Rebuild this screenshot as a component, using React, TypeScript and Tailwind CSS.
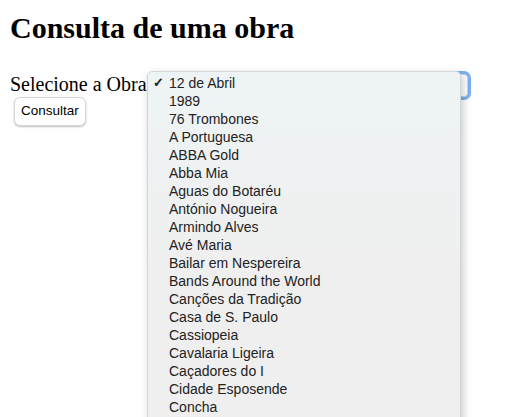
const obras = [
  "12 de Abril",
  "1989",
  "76 Trombones",
  "A Portuguesa",
  "ABBA Gold",
  "Abba Mia",
  "Aguas do Botaréu",
  "António Nogueira",
  "Armindo Alves",
  "Avé Maria",
  "Bailar em Nespereira",
  "Bands Around the World",
  "Canções da Tradição",
  "Casa de S. Paulo",
  "Cassiopeia",
  "Cavalaria Ligeira",
  "Caçadores do I",
  "Cidade Esposende",
  "Concha",
];

export default function App() {
  return (
    <div className="relative h-[417px] w-[519px] overflow-hidden bg-white pl-[10px] text-black" style={{ fontFamily: '"Liberation Serif", serif' }}>
      <h1 className="pt-[10px] text-[30px] font-bold leading-[36px]">Consulta de uma obra</h1>

      <form className="mt-[26px]">
        <div className="flex items-start">
          <label className="text-[20px] leading-[24px]">Selecione a Obra</label>
          {/* select behind the open menu, focused */}
          <div className="relative ml-[4px] mt-[2px] h-[23px] w-[317px] rounded-[4px] border border-gray-300 bg-white shadow-[0_0_0_3px_rgba(80,150,240,0.75)]" />
        </div>
        <button
          type="button"
          className="ml-[4px] h-[29px] rounded-[6px] border border-gray-300 bg-white px-[6px] text-[13.5px] shadow-[0_1px_2px_rgba(0,0,0,0.25)]"
          style={{ fontFamily: '"Liberation Sans", Arial, sans-serif' }}
        >
          Consultar
        </button>
      </form>

      {/* open dropdown list */}
      <div
        className="absolute left-[147px] top-[71px] w-[314px] rounded-[5px] border border-gray-300 bg-gradient-to-b from-[#eef4f5] via-[#efefef] to-[#efefef] pb-10 pt-[2px] shadow-[2px_3px_8px_rgba(0,0,0,0.22)]"
        style={{ fontFamily: '"Liberation Sans", Arial, sans-serif' }}
      >
        <ul className="text-[14px] leading-[18px] text-[#222]">
          {obras.map((o, i) => (
            <li key={o} className="flex pl-[5px]">
              <span className="w-[16px] text-[13px] font-bold">{i === 0 ? "✓" : ""}</span>
              {o}
            </li>
          ))}
        </ul>
      </div>
    </div>
  );
}
